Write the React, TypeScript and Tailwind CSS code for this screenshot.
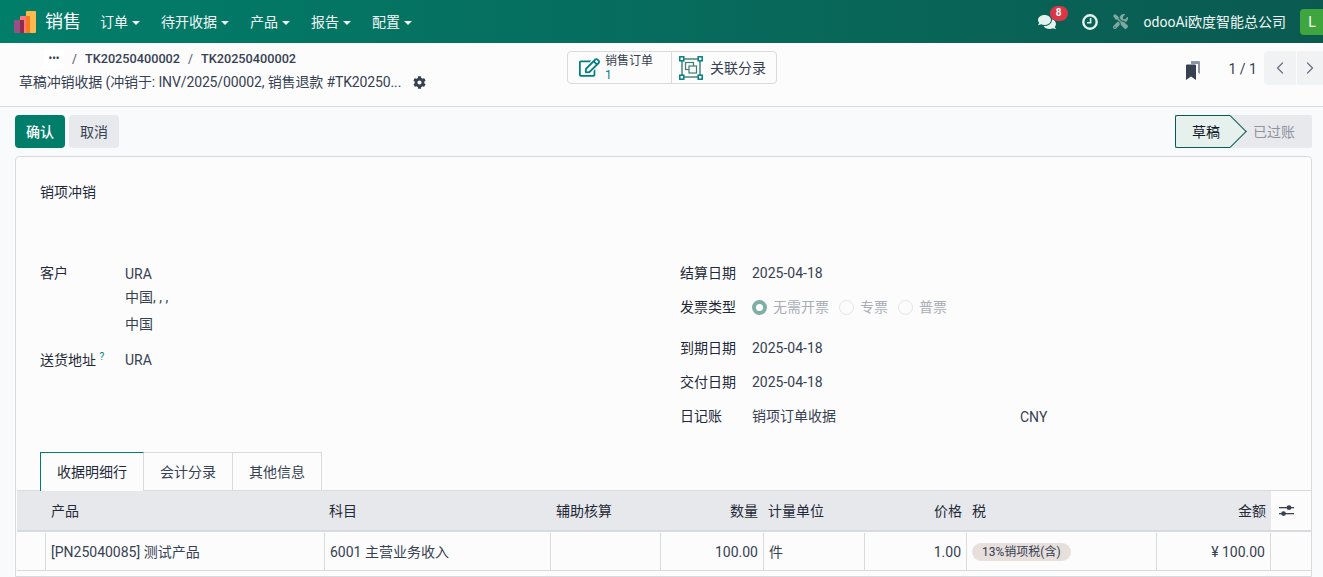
import { FaComments, FaCog, FaRegEdit, FaTools } from 'react-icons/fa'
import { ChevronLeft, ChevronRight } from 'lucide-react'

const menus = ['订单', '待开收据', '产品', '报告', '配置']

function Logo() {
  return (
    <svg width="22" height="22" viewBox="0 0 22 22" className="shrink-0">
      <rect x="12" y="0" width="10" height="22" rx="1" fill="#ffb84d" />
      <rect x="6" y="5" width="10" height="17" rx="1" fill="#ff7b7b" />
      <rect x="12" y="5" width="4" height="17" fill="#f9791f" />
      <rect x="0" y="9" width="10" height="13" rx="1" fill="#985184" />
      <rect x="6" y="9" width="4" height="13" fill="#8f2b4c" />
    </svg>
  )
}

function Caret() {
  return <span className="ml-[4px] inline-block h-0 w-0 border-x-[4px] border-t-[4px] border-x-transparent border-t-current align-middle" />
}

function ClockIcon() {
  return (
    <svg width="16" height="16" viewBox="0 0 16 16" className="text-[#e4f2ef]">
      <circle cx="8" cy="8" r="6.7" fill="none" stroke="currentColor" strokeWidth="2.4" />
      <path d="M8.6 4V8.7H5" fill="none" stroke="currentColor" strokeWidth="1.6" />
    </svg>
  )
}

function BookmarkIcon() {
  return (
    <svg width="14" height="19" viewBox="0 0 14 19">
      <path d="M5 0h8a1 1 0 0 1 1 1v12l-2-1.5V3H5z" fill="#8f96a1" />
      <path d="M0 4.5a1 1 0 0 1 1-1h8a1 1 0 0 1 1 1V19l-5-3.5L0 19z" fill="#374151" />
    </svg>
  )
}

function LinkedIcon() {
  return (
    <svg width="24" height="24" viewBox="0 0 24 24" fill="none">
      <rect x="3" y="3" width="18" height="18" stroke="#3f7f70" strokeWidth="1.4" />
      <rect x="6.5" y="6.5" width="8" height="7" stroke="#3f7f70" strokeWidth="1.2" />
      <rect x="10" y="10" width="7.5" height="7" fill="#fbfbfc" stroke="#3f7f70" strokeWidth="1.2" />
      <rect x="0.8" y="0.8" width="4" height="4" fill="#fff" stroke="#017e84" strokeWidth="1.5" />
      <rect x="19.2" y="0.8" width="4" height="4" fill="#fff" stroke="#017e84" strokeWidth="1.5" />
      <rect x="0.8" y="19.2" width="4" height="4" fill="#fff" stroke="#017e84" strokeWidth="1.5" />
      <rect x="19.2" y="19.2" width="4" height="4" fill="#fff" stroke="#017e84" strokeWidth="1.5" />
    </svg>
  )
}

function AdjustIcon() {
  return (
    <svg width="15" height="13" viewBox="0 0 15 13" fill="#374151">
      <rect x="0" y="3" width="15" height="1.3" />
      <circle cx="10" cy="3.6" r="2.4" />
      <rect x="0" y="9" width="15" height="1.3" />
      <circle cx="4.5" cy="9.6" r="2.4" />
    </svg>
  )
}

function Radio({ label, checked }: { label: string; checked?: boolean }) {
  return (
    <span className="flex items-center gap-[6px] text-[#a9adb5]">
      {checked ? (
        <span className="h-[15px] w-[15px] rounded-full border-[4px] border-[#80aea4] bg-white" />
      ) : (
        <span className="h-[15px] w-[15px] rounded-full border border-[#e2e4e8] bg-[#fcfcfd]" />
      )}
      {label}
    </span>
  )
}

function Field({ label, value, className }: { label: string; value: string; className?: string }) {
  return (
    <div className={`flex ${className ?? ''}`}>
      <span className="w-[72px] text-[#1f2937]">{label}</span>
      <span>{value}</span>
    </div>
  )
}

const cols = 'grid grid-cols-[29px_279px_226px_110px_103px_101px_102px_190px_114px_41px]'

export default function App() {
  return (
    <div className="h-[577px] w-[1323px] overflow-hidden bg-[#f9fafb] text-[14px] leading-[20px] text-[#374151] [font-family:'Roboto','Noto_Sans_CJK_SC',sans-serif]">
      {/* navbar */}
      <header className="flex h-[43px] items-center bg-gradient-to-r from-[#017e6a] to-[#0a5a50] pl-[14px] text-[#f1f7f6]">
        <Logo />
        <span className="ml-[9px] text-[18px] text-white">销售</span>
        <nav className="ml-[19px] flex gap-[21px]">
          {menus.map((m) => (
            <span key={m} className="whitespace-nowrap">
              {m}
              <Caret />
            </span>
          ))}
        </nav>
        <div className="ml-auto flex items-center">
          <span className="relative mr-[26px] flex items-center text-[#e4f2ef]">
            <FaComments size={18} />
            <span className="absolute -top-[7px] left-[12px] flex h-[15px] w-[18px] items-center justify-center rounded-full bg-[#dc3545] text-[10px] font-bold text-white">8</span>
          </span>
          <ClockIcon />
          <FaTools size={15} className="ml-[15px] text-[#7fa8a0]" />
          <span className="ml-[16px] whitespace-nowrap">odooAi欧度智能总公司</span>
          <span className="ml-[14px] mr-[-1px] flex h-[26px] w-[24px] items-center justify-center rounded-l-[4px] bg-[#3fa53f] text-[14px] text-white">L</span>
        </div>
      </header>

      {/* control panel */}
      <div className="flex h-[64px] border-b border-[#d8dadd] bg-[#fcfcfd]">
        <div className="w-[567px] pl-[19px] pt-[6px]">
          <div className="flex h-[20px] items-center pl-[25px] text-[12.7px] font-medium text-[#374151]">
            <span className="flex h-[20px] w-[20px] items-center justify-center bg-white text-[10px] font-bold leading-none">•••</span>
            <span className="ml-[8px] text-[#6b7280]">/</span>
            <span className="ml-[8px]">TK20250400002</span>
            <span className="ml-[8px] text-[#6b7280]">/</span>
            <span className="ml-[8px]">TK20250400002</span>
          </div>
          <div className="mt-[3px] flex items-center">
            <span className="whitespace-nowrap tracking-[-0.13px]">草稿冲销收据 (冲销于: INV/2025/00002, 销售退款 #TK20250...</span>
            <FaCog size={13} className="ml-[12px] text-[#374151]" />
          </div>
        </div>
        <div className="mt-[8px] flex h-[33px] rounded-[4px] border border-[#d8dadd] bg-[#fcfcfd]">
          <div className="flex w-[104px] items-center border-r border-[#d8dadd] pl-[11px]">
            <FaRegEdit size={21} className="text-[#017e84]" />
            <div className="ml-[5px] text-[12px] leading-[14px]">
              <div>销售订单</div>
              <div className="text-[#017e84]">1</div>
            </div>
          </div>
          <div className="flex w-[104px] items-center pl-[7px]">
            <LinkedIcon />
            <span className="ml-[7px]">关联分录</span>
          </div>
        </div>
        <div className="ml-auto flex items-start pt-[8px]">
          <span className="mr-[29px] mt-[10px]"><BookmarkIcon /></span>
          <span className="mr-[7px] mt-[8px] text-[#374151]">1 / 1</span>
          <span className="flex h-[34px] w-[32px] items-center justify-center rounded-l-[4px] bg-[#f1f2f4] text-[#6b7280]">
            <ChevronLeft size={20} strokeWidth={1.5} />
          </span>
          <span className="ml-[1px] flex h-[34px] w-[26px] items-center justify-center bg-[#f1f2f4] text-[#6b7280]">
            <ChevronRight size={20} strokeWidth={1.5} />
          </span>
        </div>
      </div>

      {/* action buttons and status */}
      <div className="flex h-[49px] items-start pl-[15px] pr-[11px] pt-[8px]">
        <button className="h-[33px] w-[50px] rounded-[4px] bg-[#017e6a] font-medium text-white">确认</button>
        <button className="ml-[4px] h-[33px] w-[50px] rounded-[4px] bg-[#e7e9ed] text-[#374151]">取消</button>
        <div className="ml-auto flex h-[33px] w-[137px] rounded-r-[2px] bg-[#e7e9ed]">
          <div className="relative flex w-[55px] items-center rounded-l-[2px] border-y border-l border-[#0a5a50] bg-[#e6f0ec] pl-[16px] text-[#111827]">
            <span className="absolute -right-[12px] top-[4px] h-[23px] w-[23px] rotate-45 border-r border-t border-[#0a5a50] bg-[#e6f0ec]" />
            <span className="relative whitespace-nowrap">草稿</span>
          </div>
          <span className="ml-[23px] flex items-center text-[#8f949c]">已过账</span>
        </div>
      </div>

      {/* sheet */}
      <main className="ml-[15px] mr-[11px] h-[421px] overflow-hidden rounded-t-[4px] border border-[#d8dadd] bg-[#fcfcfd]">
        <div className="pl-[24px] pt-[25px] text-[#1f2937]">销项冲销</div>

        <div className="mt-[61px] flex pl-[24px]">
          <div className="w-[640px]">
            <div className="flex">
              <span className="w-[85px] text-[#1f2937]">客户</span>
              <div>
                <div className="pt-[1px]">URA</div>
                <div className="mt-[3px]">中国, , ,</div>
                <div className="mt-[7px]">中国</div>
              </div>
            </div>
            <div className="mt-[16px] flex">
              <span className="w-[85px] text-[#1f2937]">
                送货地址 <sup className="text-[10px] text-[#017e84]">?</sup>
              </span>
              <span>URA</span>
            </div>
          </div>
          <div>
            <Field label="结算日期" value="2025-04-18" />
            <div className="mt-[14px] flex">
              <span className="w-[72px] text-[#1f2937]">发票类型</span>
              <div className="flex gap-[10px]">
                <Radio label="无需开票" checked />
                <Radio label="专票" />
                <Radio label="普票" />
              </div>
            </div>
            <Field label="到期日期" value="2025-04-18" className="mt-[21px]" />
            <Field label="交付日期" value="2025-04-18" className="mt-[14px]" />
            <div className="mt-[14px] flex">
              <Field label="日记账" value="销项订单收据" />
              <span className="ml-[184px] mt-[1px]">CNY</span>
            </div>
          </div>
        </div>

        {/* tabs */}
        <div className="mt-[25px] flex h-[39px] pl-[24px]">
          <span className="z-10 flex h-[39px] w-[104px] items-center justify-center border-x border-t border-x-[#d8dadd] border-l-[#017e6a] border-t-[#017e6a] bg-[#fcfcfd] text-[#1f2937]">收据明细行</span>
          <span className="flex h-[38px] w-[89px] items-center justify-center border-r border-t border-[#d8dadd]">会计分录</span>
          <span className="flex h-[38px] w-[89px] items-center justify-center border-r border-t border-[#d8dadd]">其他信息</span>
        </div>

        {/* lines */}
        <div className="-mt-[1px] pl-[1px]">
          <div className={`${cols} h-[42px] items-center border-y border-b-[2px] border-y-[#d8dadd] text-[#1f2937]`}>
            <span className="col-span-2 flex h-full items-center bg-[#e7e8ec] pl-[34px]">产品</span>
            <span className="flex h-full items-center bg-[#e7e8ec] pl-[4px]">科目</span>
            <span className="flex h-full items-center bg-[#e7e8ec] pl-[5px]">辅助核算</span>
            <span className="flex h-full items-center justify-end bg-[#e7e8ec] pr-[6px]">数量</span>
            <span className="flex h-full items-center bg-[#e7e8ec] pl-[4px]">计量单位</span>
            <span className="flex h-full items-center justify-end bg-[#e7e8ec] pr-[5px]">价格</span>
            <span className="flex h-full items-center bg-[#e7e8ec] pl-[5px]">税</span>
            <span className="flex h-full items-center justify-end bg-[#e7e8ec] pr-[5px]">金额</span>
            <span className="flex h-full items-center pl-[8px]"><AdjustIcon /></span>
          </div>
          <div className={`${cols} h-[39px] items-stretch border-b border-[#d8dadd] pt-[1px] [&>*]:border-r [&>*]:border-[#d8dadd]`}>
            <span />
            <span className="flex items-center pl-[5px]">[PN25040085] 测试产品</span>
            <span className="flex items-center pl-[5px]">6001 主营业务收入</span>
            <span />
            <span className="flex items-center justify-end pr-[5px]">100.00</span>
            <span className="flex items-center pl-[5px]">件</span>
            <span className="flex items-center justify-end pr-[5px]">1.00</span>
            <span className="flex items-center pl-[5px]">
              <span className="flex h-[18px] items-center rounded-full bg-[#e6dfdc] px-[10px] text-[12px]">13%销项税(含)</span>
            </span>
            <span className="flex items-center justify-end pr-[5px]">¥ 100.00</span>
            <span className="!border-r-0" />
          </div>
        </div>
      </main>
    </div>
  )
}
